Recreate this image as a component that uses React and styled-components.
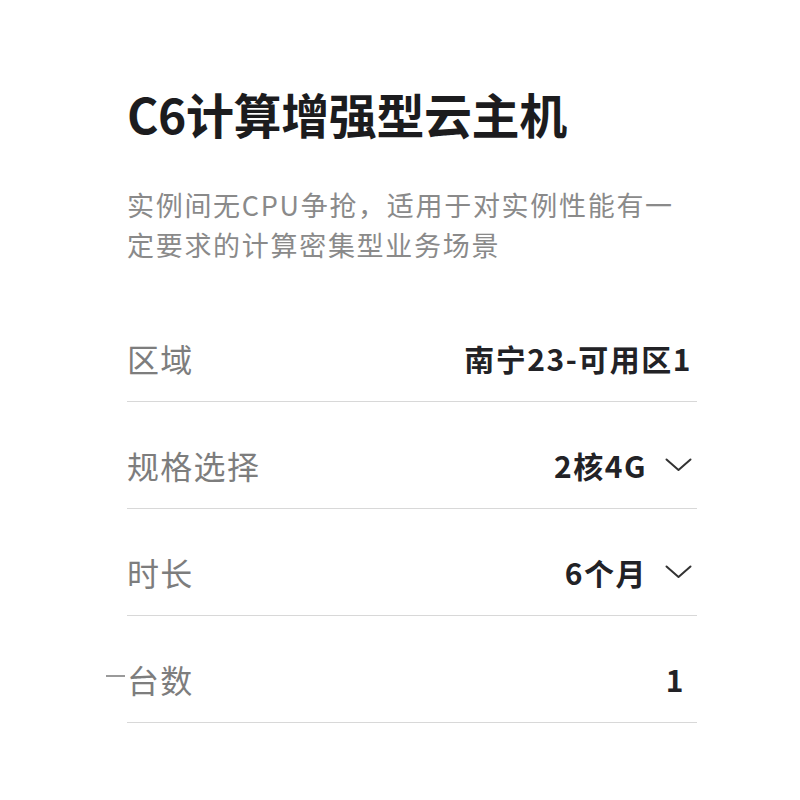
import React from "react";
import styled, { createGlobalStyle } from "styled-components";

const Global = createGlobalStyle`
  html, body { margin: 0; padding: 0; background: #ffffff; }
  body { font-family: "Noto Sans CJK SC", "Noto Sans", sans-serif; }
`;

const Page = styled.div`
  width: 800px;
  height: 800px;
  box-sizing: border-box;
  padding: 81px 0 0 127px;
  background: #ffffff;
`;

const Panel = styled.section`
  width: 570px;
  display: flex;
  flex-direction: column;
`;

const Title = styled.h1`
  margin: 0;
  font-size: 48px;
  line-height: 65px;
  font-weight: 700;
  letter-spacing: -0.4px;
  color: #1c1c1e;
  white-space: nowrap;
`;

const Desc = styled.p`
  margin: 39px 0 0;
  font-size: 27px;
  line-height: 40px;
  font-weight: 400;
  letter-spacing: 1.7px;
  color: #8a8a8a;
  white-space: nowrap;
`;

const List = styled.div`
  margin-top: 30px;
  display: flex;
  flex-direction: column;
`;

const Row = styled.div`
  height: 86px;
  padding: 20px 5px 0 0;
  display: flex;
  align-items: center;
  justify-content: space-between;
  border-bottom: 1px solid #d8d8d8;
`;

const Label = styled.span`
  position: relative;
  font-size: 32px;
  letter-spacing: 1.3px;
  color: #7d7d7d;
  line-height: 40px;
  &::before {
    content: "";
    display: ${(p) => (p.$mark ? "block" : "none")};
    position: absolute;
    left: -21px;
    top: 16px;
    width: 19px;
    height: 1.5px;
    background: #9a9a9a;
  }
`;

const Value = styled.span`
  display: flex;
  align-items: center;
  gap: 18px;
  margin-right: ${(p) => p.$inset || 0}px;
  font-size: 30px;
  line-height: 40px;
  font-weight: 700;
  letter-spacing: 1.5px;
  color: #222226;
`;

const Chevron = () => (
  <svg width="27" height="14" viewBox="0 0 27 14" fill="none">
    <polyline
      points="1.5,1.5 13.5,12 25.5,1.5"
      stroke="#333"
      strokeWidth="2"
      strokeLinecap="round"
      strokeLinejoin="round"
    />
  </svg>
);

const rows = [
  { label: "区域", value: "南宁23-可用区1" },
  { label: "规格选择", value: "2核4G", select: true },
  { label: "时长", value: "6个月", select: true },
  { label: "台数", value: "1", inset: 7, mark: true },
];

export default function App() {
  return (
    <>
      <Global />
      <Page>
        <Panel>
          <Title>C6计算增强型云主机</Title>
          <Desc>
            实例间无CPU争抢，适用于对实例性能有一
            <br />
            定要求的计算密集型业务场景
          </Desc>
          <List>
            {rows.map((r) => (
              <Row key={r.label}>
                <Label $mark={r.mark}>{r.label}</Label>
                <Value $inset={r.inset}>
                  {r.value}
                  {r.select && <Chevron />}
                </Value>
              </Row>
            ))}
          </List>
        </Panel>
      </Page>
    </>
  );
}
